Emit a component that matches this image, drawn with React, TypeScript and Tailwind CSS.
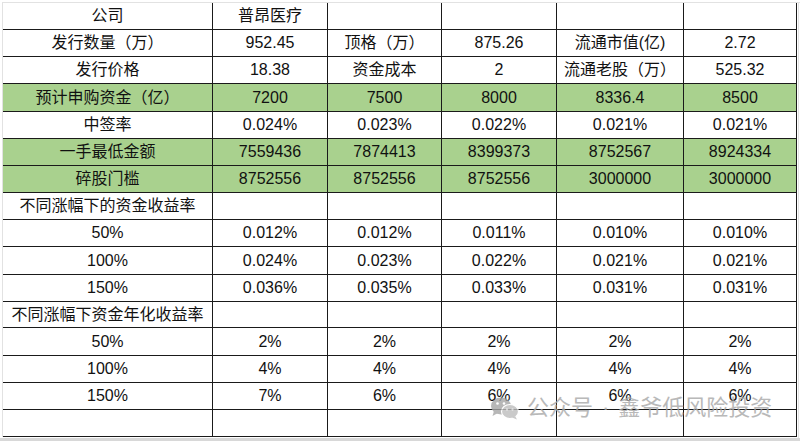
const rows: { cells: string[]; green?: boolean; h: string }[] = [
  { cells: ["公司", "普昂医疗", "", "", "", ""], h: "h-[27px]" },
  { cells: ["发行数量（万）", "952.45", "顶格（万）", "875.26", "流通市值(亿)", "2.72"], h: "h-[27px]" },
  { cells: ["发行价格", "18.38", "资金成本", "2", "流通老股（万）", "525.32"], h: "h-[27px]" },
  { cells: ["预计申购资金（亿）", "7200", "7500", "8000", "8336.4", "8500"], green: true, h: "h-[28px]" },
  { cells: ["中签率", "0.024%", "0.023%", "0.022%", "0.021%", "0.021%"], h: "h-[27px]" },
  { cells: ["一手最低金额", "7559436", "7874413", "8399373", "8752567", "8924334"], green: true, h: "h-[27px]" },
  { cells: ["碎股门槛", "8752556", "8752556", "8752556", "3000000", "3000000"], green: true, h: "h-[27px]" },
  { cells: ["不同涨幅下的资金收益率", "", "", "", "", ""], h: "h-[27px]" },
  { cells: ["50%", "0.012%", "0.012%", "0.011%", "0.010%", "0.010%"], h: "h-[27px]" },
  { cells: ["100%", "0.024%", "0.023%", "0.022%", "0.021%", "0.021%"], h: "h-[28px]" },
  { cells: ["150%", "0.036%", "0.035%", "0.033%", "0.031%", "0.031%"], h: "h-[27px]" },
  { cells: ["不同涨幅下资金年化收益率", "", "", "", "", ""], h: "h-[26px]" },
  { cells: ["50%", "2%", "2%", "2%", "2%", "2%"], h: "h-[28px]" },
  { cells: ["100%", "4%", "4%", "4%", "4%", "4%"], h: "h-[27px]" },
  { cells: ["150%", "7%", "6%", "6%", "6%", "6%"], h: "h-[27px]" },
  { cells: ["", "", "", "", "", ""], h: "h-[27px]" },
];

const widths = ["w-[210px]", "w-[115px]", "w-[114px]", "w-[115px]", "w-[127px]", "w-[113px]"];

function WeChatIcon() {
  return (
    <svg width="30" height="24" viewBox="0 0 30 24">
      <ellipse cx="11" cy="10" rx="10" ry="8.5" fill="#a6a6a6" />
      <path d="M4 15 L2.5 20 L8 17 Z" fill="#a6a6a6" />
      <circle cx="7.5" cy="7.5" r="1.3" fill="#fff" />
      <circle cx="14" cy="7.5" r="1.3" fill="#fff" />
      <ellipse cx="20" cy="15.5" rx="8.5" ry="7" fill="#bdbdbd" stroke="#fff" strokeWidth="1.2" />
      <path d="M25 20 L27 23.5 L22 21.5 Z" fill="#bdbdbd" />
      <circle cx="17" cy="13.5" r="1.1" fill="#fff" />
      <circle cx="22.5" cy="13.5" r="1.1" fill="#fff" />
    </svg>
  );
}

export default function App() {
  return (
    <div
      className="relative w-[800px] h-[441px] bg-white overflow-hidden text-[#111] text-[16px]"
      style={{ fontFamily: '"Liberation Sans", "Noto Sans CJK SC", sans-serif' }}
    >
      <div className="pl-[2px] pt-[2px]">
        <div className="border-l border-t border-[#e2e2e2] w-[798px]">
          {rows.map((row, ri) => (
            <div key={ri} className={`flex ${row.h}`}>
              {row.cells.map((c, ci) => (
                <div
                  key={ci}
                  className={`${widths[ci]} shrink-0 flex items-center justify-center border-b border-r border-[#1a1a1a] whitespace-nowrap ${
                    row.green ? "bg-[#a9d18e]" : "bg-white"
                  }`}
                >
                  {c}
                </div>
              ))}
            </div>
          ))}
        </div>
      </div>
      <div className="absolute left-0 right-0 bottom-0 h-[3px] bg-[#d8d8d8]" />
      <div className="absolute right-[1px] top-[2px] bottom-[3px] w-px bg-[#e2e2e2]" />

      <div className="absolute left-[490px] top-[396px] flex items-center gap-[7px] opacity-80">
        <WeChatIcon />
        <span className="text-[22px] leading-none text-[#a8a8a8]">公众号</span>
        <span className="text-[22px] leading-none text-[#a8a8a8] px-[2px]">·</span>
        <span className="text-[22px] leading-none text-[#a8a8a8]">鑫爷低风险投资</span>
      </div>
    </div>
  );
}
